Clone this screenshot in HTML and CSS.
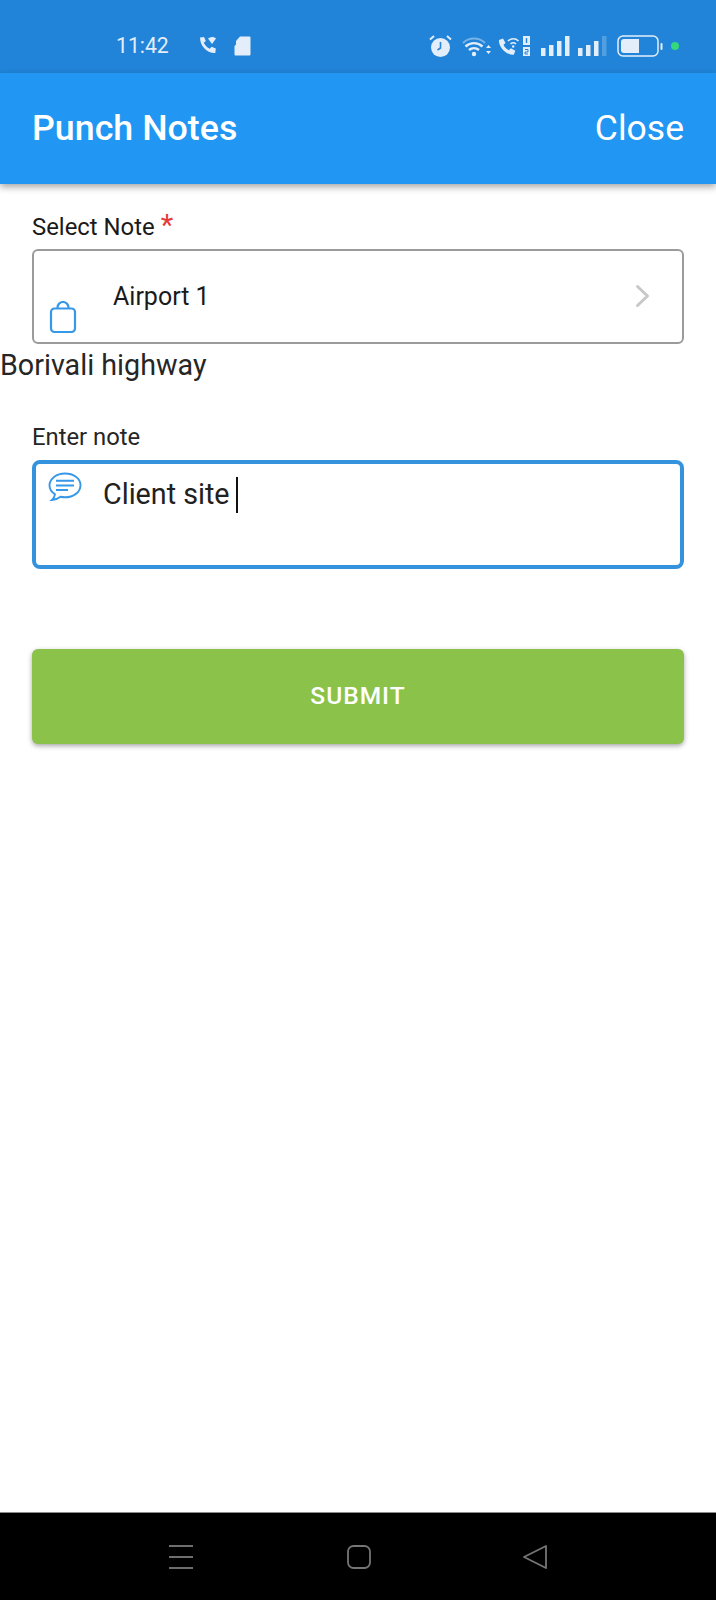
FILE: index.html
```html
<!DOCTYPE html>
<html lang="en">
<head>
<meta charset="utf-8">
<title>Punch Notes</title>
<link rel="stylesheet" href="styles.css">
</head>
<body>
<div class="screen">
  <div class="status">
    <span class="time">11:42</span>
    <svg class="s-call" width="20" height="20" viewBox="0 0 20 20"><path d="M2 1.500 6 1l1.800 4-2 1.800c1 2.500 3.500 5 6 6l1.800-2 4.200 1.800-.5 4.400C9 17.500 2 10 2 1.500Z" fill="#e3eefa"/><path d="M10 2.500c2.600-2 5.600-2 8 0L14 8Z" fill="#e3eefa"/></svg>
    <svg class="s-sd" width="17" height="20" viewBox="0 0 17 20"><path d="M6 .5h9.500a1 1 0 0 1 1 1v17a1 1 0 0 1-1 1H1.500a1 1 0 0 1-1-1V10l1.500-1.500V5Z" fill="#e3eefa"/></svg>
    <span class="s-gap"></span>
    <svg class="s-alarm" width="23" height="24" viewBox="0 0 23 24"><circle cx="11.500" cy="13.500" r="9.500" fill="#e3eefa"/><path d="M11.500 8v6l-3 2" fill="none" stroke="#2a84d8" stroke-width="1.600"/><path d="M1 5.500 5 2M22 5.500 18 2" stroke="#e3eefa" stroke-width="2" fill="none"/></svg>
    <svg class="s-wifi" width="30" height="22" viewBox="0 0 30 22"><path d="M1 8c6-6 16-6 22 0" fill="none" stroke="#e3eefa" stroke-opacity=".45" stroke-width="2"/><path d="M3.500 11.500c5-4.500 12-4.500 17 0M7 15c3-2.500 7-2.500 10 0" fill="none" stroke="#e3eefa" stroke-width="2.400"/><circle cx="12" cy="19" r="2.200" fill="#e3eefa"/><path d="M24 13h5l-2.500-3ZM24 16h5l-2.500 3Z" fill="#e3eefa"/></svg>
    <svg class="s-volte" width="34" height="22" viewBox="0 0 34 22"><path d="M2 5 6 3.500l2.500 4.500-2 1.800c1 2.500 3 4.500 5.500 5.500l1.800-2 4.500 2.500-1.500 4C9 20 1.500 12 2 5Z" fill="#e3eefa"/><path d="M11 6c3-3 7.500-3 10.500 0M13.500 9c1.700-1.500 3.800-1.500 5.500 0" fill="none" stroke="#e3eefa" stroke-width="1.600"/><circle cx="16.200" cy="11.500" r="1.200" fill="#e3eefa"/><rect x="26" y="1" width="7" height="9" fill="#e3eefa"/><rect x="26" y="12" width="7" height="9" fill="#e3eefa"/><path d="M29.500 3v5" stroke="#2a84d8" stroke-width="1.400"/><path d="M28 14.500h3v2.500h-3v2h3" stroke="#2a84d8" stroke-width="1" fill="none"/></svg>
    <svg class="s-bars" width="30" height="20" viewBox="0 0 30 20"><rect x="0" y="12" width="4.500" height="8" fill="#e3eefa"/><rect x="8" y="9" width="4.500" height="11" fill="#e3eefa"/><rect x="16" y="5" width="4.500" height="15" fill="#e3eefa"/><rect x="24" y="0" width="4.500" height="20" fill="#e3eefa"/></svg>
    <svg class="s-bars2" width="30" height="20" viewBox="0 0 30 20"><rect x="0" y="12" width="4.500" height="8" fill="#e3eefa"/><rect x="8" y="9" width="4.500" height="11" fill="#e3eefa"/><rect x="16" y="5" width="4.500" height="15" fill="#e3eefa"/><rect x="24" y="0" width="4.500" height="20" fill="#e3eefa" fill-opacity=".25"/></svg>
    <svg class="s-batt" width="46" height="22" viewBox="0 0 46 22"><rect x="1" y="1" width="40" height="20" rx="5" fill="none" stroke="#e3eefa" stroke-width="1.500"/><path d="M7 4h15v14H7a3 3 0 0 1-3-3V7a3 3 0 0 1 3-3Z" fill="#e3eefa"/><rect x="43.500" y="8" width="2" height="7" rx="1" fill="#e3eefa"/></svg>
    <span class="s-dot"></span>
  </div>
  <header class="appbar">
    <span class="title">Punch Notes</span>
    <span class="close">Close</span>
  </header>
  <main class="content">
    <div class="label-row">
      <span class="label">Select Note</span>
      <span class="required">*</span>
    </div>
    <div class="select">
      <svg class="bag" width="28" height="34" viewBox="0 0 28 34"><rect x="2" y="7.500" width="24" height="23.500" rx="3.500" fill="none" stroke="#3797e8" stroke-width="2.200"/><path d="M8.500 7.500V6.500a5.500 5.500 0 0 1 11 0v1" fill="none" stroke="#3797e8" stroke-width="2.200"/></svg>
      <span class="select-value">Airport 1</span>
      <svg class="chev" width="16" height="24" viewBox="0 0 16 24"><path d="M2.500 2.500l10 9.500-10 9.500" fill="none" stroke="#c8c8c8" stroke-width="3" stroke-linecap="round" stroke-linejoin="round"/></svg>
    </div>
    <div class="address">Borivali highway</div>
    <div class="field-label">Enter note</div>
    <div class="note">
      <svg class="bubble" width="34" height="31" viewBox="0 0 34 30" preserveAspectRatio="none"><path d="M17 1.500C8.500 1.500 1.500 6.500 1.500 12.800c0 3.500 2 6.500 5.500 8.700-.3 2.300-1.500 4.200-3 5.500 3.200-.2 6.300-1.300 8.500-3 1.500.3 3 .5 4.500.5 8.500 0 15.500-5 15.500-11.700S25.500 1.500 17 1.500Z" fill="none" stroke="#3797e8" stroke-width="1.900"/><path d="M8 8.500h18M8 13h18M8 17.500h12" stroke="#3797e8" stroke-width="2" fill="none"/></svg>
      <span class="note-text">Client site</span>
      <span class="caret"></span>
    </div>
    <button class="submit" type="button">SUBMIT</button>
  </main>
  <footer class="navbar">
    <svg width="24" height="24" viewBox="0 0 24 24"><path d="M0 1h24M0 12h24M0 23h24" stroke="#6e6e6e" stroke-width="1.800" fill="none"/></svg>
    <svg class="nav-home" width="24" height="24" viewBox="0 0 24 24"><rect x="1" y="1" width="22" height="22" rx="5.500" fill="none" stroke="#757575" stroke-width="1.800"/></svg>
    <svg width="24" height="24" viewBox="0 0 24 24"><path d="M23 1 1 12l22 11Z" fill="none" stroke="#757575" stroke-width="1.800" stroke-linejoin="round"/></svg>
  </footer>
</div>
</body>
</html>
```
FILE: styles.css
```css
* { box-sizing: border-box; }
html, body { margin: 0; padding: 0; }
body { font-family: Roboto, sans-serif; background: #fff; }
.screen { width: 716px; height: 1600px; display: flex; flex-direction: column; overflow: hidden; }

.status { height: 73px; flex: none; background: #2184d9; color: #e3eefa; display: flex; align-items: center; padding: 19px 0 0 116px; }
.status svg { flex: none; display: block; }
.time { font-size: 21.200px; line-height: 30px; width: 52px; white-space: nowrap; }
.s-call { margin-left: 30px; }
.s-sd { margin-left: 16px; }
.s-gap { flex: 1; }
.s-wifi { margin-left: 10px; }
.s-volte { margin-left: 5px; }
.s-bars { margin-left: 10px; }
.s-bars2 { margin-left: 7px; }
.s-batt { margin-left: 9px; }
.s-dot { width: 8px; height: 8px; border-radius: 50%; background: #34d77c; margin: 0 37px 0 8px; flex: none; }

.appbar { height: 111px; flex: none; background: #2196f3; color: #fff; display: flex; align-items: center; justify-content: space-between; padding: 0 32px 2px; box-shadow: 0 3px 7px rgba(0,0,0,.35); position: relative; }
.title { font-size: 35.800px; font-weight: 500; }
.close { font-size: 35.500px; }

.content { flex: 1; display: flex; flex-direction: column; padding: 0 32px; }
.label-row { display: flex; height: 65px; padding-top: 29px; }
.label { font-size: 23.900px; line-height: 28px; color: #1a1a1a; }
.required { font-size: 29px; line-height: 28px; color: #e53935; margin: -2px 0 0 6px; }

.select { height: 95px; border: 2px solid #9b9b9b; border-radius: 6px; display: flex; align-items: center; padding: 0 31px 0 15px; }
.bag { align-self: flex-end; margin-bottom: 7px; }
.select-value { flex: 1; margin-left: 36px; font-size: 25px; color: #1a1a1a; }
.chev { margin-top: -2px; }

.address { margin: 5px 0 0 -32px; font-size: 28.700px; line-height: 33px; color: #262626; }
.field-label { margin-top: 41px; font-size: 23.800px; line-height: 28px; color: #262626; }

.note { margin-top: 9px; height: 109px; border: 4px solid #3593dd; border-radius: 8px; display: flex; align-items: flex-start; padding: 8px 0 0 12px; }
.bubble { flex: none; }
.note-text { margin-left: 21px; font-size: 28.700px; line-height: 44px; color: #212121; }
.caret { width: 2px; height: 36px; background: #111; margin: 5px 0 0 6px; }

.submit { margin-top: 80px; height: 95px; width: 100%; border: 0; border-radius: 6px; padding: 0 0 2px; background: #8bc34a; color: #fff; font-family: Roboto, sans-serif; font-size: 24.500px; font-weight: 500; letter-spacing: 1px; box-shadow: 0 2px 5px rgba(0,0,0,.35); }

.navbar { height: 88px; flex: none; background: #000; border-top: 1px solid #8a8a8a; display: flex; align-items: center; padding: 0 169px; justify-content: space-between; }
.nav-home { margin-left: 2px; }
```
